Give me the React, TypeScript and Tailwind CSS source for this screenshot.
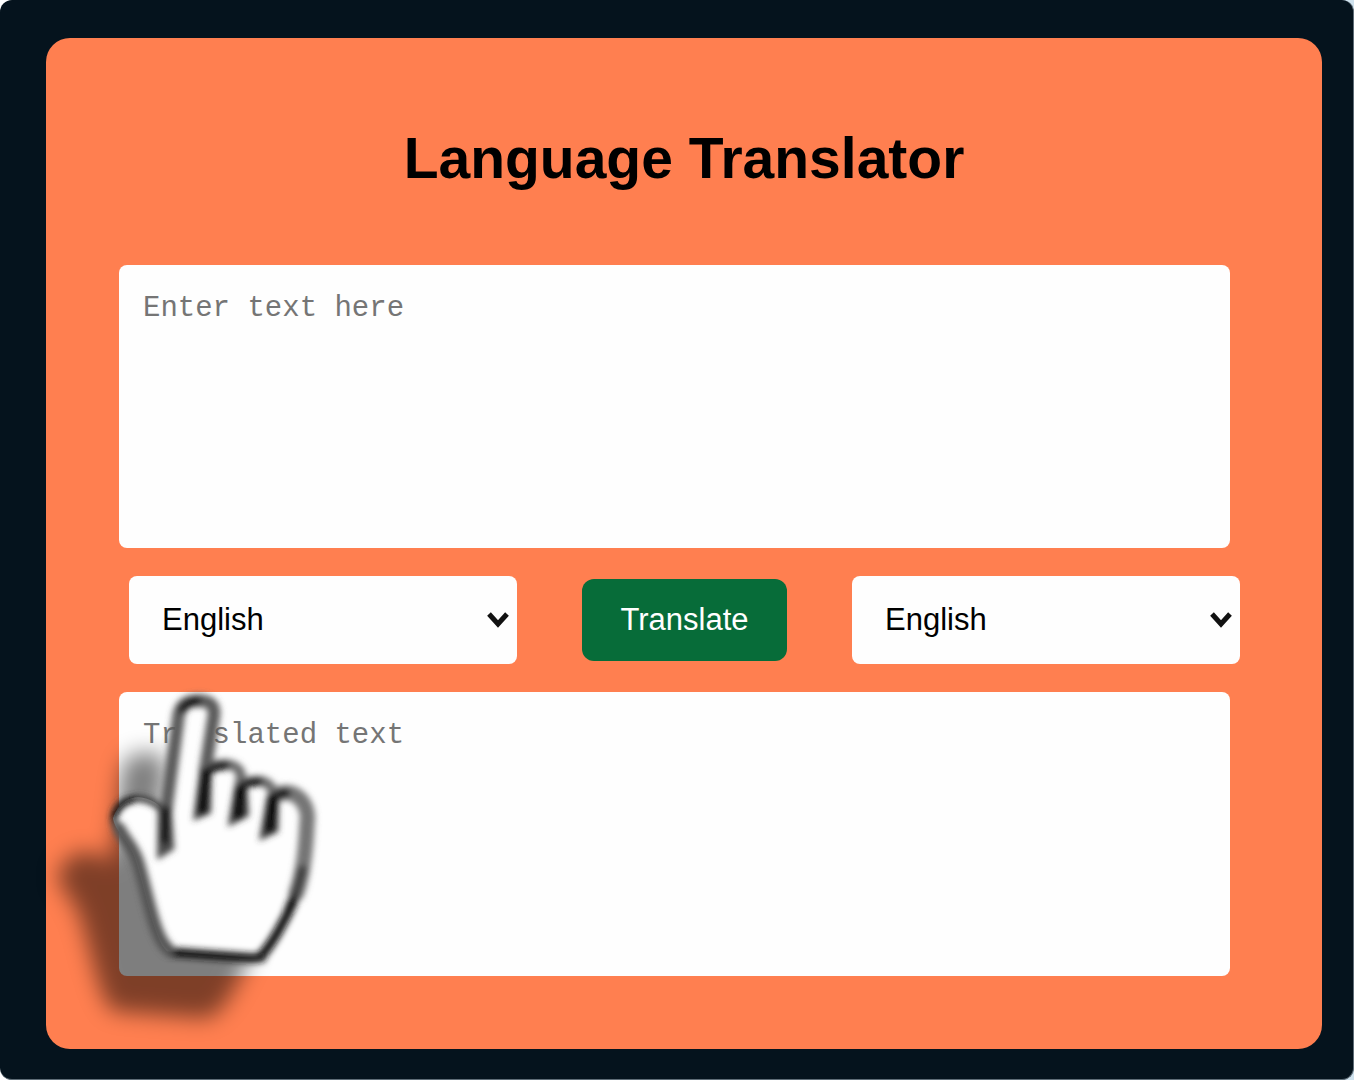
import React, { useState } from 'react';

const languages = ["English", "Spanish", "French", "German", "Hindi"];

// Hand outline, shared by the pointer and its shadow
const handShape =
    "M222 415 C235 372 270 352 298 352 C335 354 362 372 378 400 L412 120 C414 62 450 54 478 54 C512 54 532 66 529 100 L505 268 C545 246 602 246 610 286 L606 318 C645 290 700 296 708 338 C770 320 822 370 818 430 C812 540 800 640 760 705 C720 790 690 825 662 835 L385 814 C345 780 325 650 290 540 C272 480 230 460 222 415 Z";

function HandPointer() {
    return (
        <svg
            className="pointer-events-none absolute -top-3 -left-20 h-[370px] w-[300px] overflow-visible"
            viewBox="0 0 900 1110"
            fill="none"
            aria-hidden="true"
        >
            <defs>
                <filter id="softShadow" x="-30%" y="-30%" width="160%" height="160%">
                    <feGaussianBlur stdDeviation="34" />
                </filter>
                <filter id="softLine" x="-20%" y="-20%" width="140%" height="140%">
                    <feGaussianBlur stdDeviation="9" />
                </filter>
            </defs>
            <path d={handShape} transform="translate(-158 172)" fill="#000" stroke="#000" strokeWidth="16" opacity="0.5" filter="url(#softShadow)" />
            <path d={handShape} fill="#fefefe" />
            <g filter="url(#softLine)" strokeLinejoin="round" strokeLinecap="round">
                {/* thumb */}
                <path d="M240 455 C205 410 235 354 298 356 C335 358 360 374 378 405" stroke="#3a3a3a" strokeWidth="20" />
                <path d="M226 410 C234 385 255 366 285 358" stroke="#000" strokeWidth="18" />
                {/* index finger */}
                <path d="M380 400 L417 120 C420 72 445 62 478 62 C512 62 530 76 524 110 L499 270" stroke="#5a5a5a" strokeWidth="38" />
                <path d="M430 88 C440 70 455 64 475 62" stroke="#000" strokeWidth="24" />
                {/* knuckles */}
                <path d="M506 268 C540 244 598 246 606 285 L600 325" stroke="#6a6a6a" strokeWidth="30" />
                <path d="M604 320 C640 292 696 296 702 340" stroke="#6a6a6a" strokeWidth="30" />
                <path d="M506 274 C530 258 545 256 560 258" stroke="#000" strokeWidth="24" />
                <path d="M606 322 C625 308 645 304 660 306" stroke="#000" strokeWidth="24" />
                {/* outer edge of the palm */}
                <path d="M710 345 C765 318 814 370 804 430 C800 520 790 590 772 640" stroke="#747474" strokeWidth="46" />
                <path d="M706 352 C718 342 730 338 742 340" stroke="#000" strokeWidth="26" />
                <path d="M790 570 C780 610 770 650 750 690" stroke="#404040" strokeWidth="30" />
                <path d="M764 660 C740 720 695 800 662 832" stroke="#111" strokeWidth="28" />
                <path d="M668 832 L640 834 L392 816" stroke="#141414" strokeWidth="28" />
                <path d="M388 808 C345 770 330 660 298 550 C284 500 256 480 240 445" stroke="#555" strokeWidth="38" />
                {/* gaps between the fingers */}
                <path d="M356 385 L398 375 L406 508 L354 540 Z" fill="#4a4a4a" />
                <path d="M482 265 L518 265 L516 400 L462 422 Z" fill="#3c3c3c" />
                <path d="M586 320 L624 312 L630 408 L566 440 Z" fill="#3c3c3c" />
                <path d="M684 345 L720 340 L718 455 L660 482 Z" fill="#3c3c3c" />
                <path d="M380 390 L378 480" stroke="#000" strokeWidth="22" />
                <path d="M504 275 L490 390" stroke="#000" strokeWidth="26" />
                <path d="M606 325 L598 405" stroke="#000" strokeWidth="28" />
                <path d="M704 350 L692 445" stroke="#000" strokeWidth="28" />
            </g>
        </svg>
    );
}

function LanguageSelect({ label }: { label: string }) {
    const [language, setLanguage] = useState("English");

    return (
        <div className="relative w-[35%] max-w-[388px]">
            <select
                aria-label={label}
                value={language}
                onChange={(e) => setLanguage(e.target.value)}
                className="h-[88px] w-full appearance-none rounded-lg bg-[#fefefe] pr-12 pl-[33px] text-[31px] text-black"
            >
                {languages.map((name) => (
                    <option key={name}>{name}</option>
                ))}
            </select>
            <svg
                className="pointer-events-none absolute top-9 right-2 h-4 w-[22px]"
                viewBox="0 0 22 16"
                fill="none"
                aria-hidden="true"
            >
                <path d="M2 2 L11 12 L20 2" stroke="#111" strokeWidth="5" />
            </svg>
        </div>
    );
}

export default function App() {
    return (
        <div className="bg-linear-to-r from-white to-[#cfe2ee] font-['Liberation_Sans',Arial,sans-serif]">
            <main className="min-h-screen rounded-xl border-r border-b border-[#5f6d77] bg-[#05131d] pt-[38px] pr-[31px] pb-[30px] pl-[46px]">
                <div className="rounded-3xl bg-[#ff7f50] pt-[88px] pb-[73px]">
                    <h1 className="text-center text-[57px] leading-16 font-bold text-black">
                        Language Translator
                    </h1>

                    <div className="mt-[75px] pr-[92px] pl-[73px]">
                        <textarea
                            aria-label="Text to translate"
                            placeholder="Enter text here"
                            className="block h-[283px] w-full resize-none rounded-lg bg-[#fefefe] px-6 py-7 font-['Liberation_Mono',Consolas,monospace] text-[29px] leading-8 text-black placeholder:text-[#757575]"
                        />
                    </div>

                    <div className="my-7 flex items-center justify-between pr-[82px] pl-[83px]">
                        <LanguageSelect label="From" />
                        <button
                            type="button"
                            className="h-[82px] rounded-xl bg-[#076c39] px-[38px] text-[31px] text-white"
                        >
                            Translate
                        </button>
                        <LanguageSelect label="To" />
                    </div>

                    <div className="pr-[92px] pl-[73px]">
                        <div className="relative">
                            <textarea
                                aria-label="Translation"
                                placeholder="Translated text"
                                readOnly
                                className="block h-[284px] w-full resize-none rounded-lg bg-[#fefefe] px-6 py-7 font-['Liberation_Mono',Consolas,monospace] text-[29px] leading-8 text-black placeholder:text-[#757575]"
                            />
                            <HandPointer />
                        </div>
                    </div>
                </div>
            </main>
        </div>
    );
}
